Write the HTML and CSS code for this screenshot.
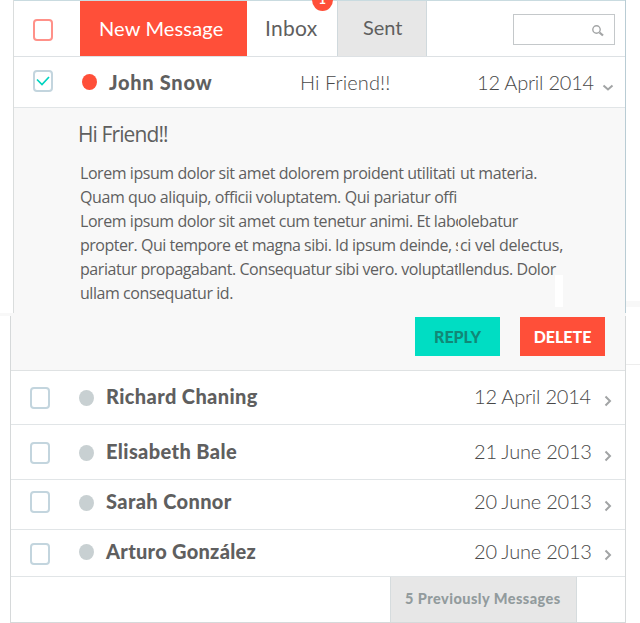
FILE: index.html
```html
<!DOCTYPE html>
<html lang="en">
<head>
<meta charset="utf-8">
<title>Messages</title>
<link rel="stylesheet" href="styles.css">
</head>
<body>
<main>
<section class="upper">
  <header class="toolbar">
    <span class="check check-red"></span>
    <a class="tab tab-new">New Message</a>
    <a class="tab tab-inbox">Inbox<span class="badge">1</span></a>
    <a class="tab tab-sent">Sent</a>
    <div class="search"><svg width="14" height="14" viewBox="0 0 14 14"><circle cx="5.5" cy="5.5" r="3.7"/><path class="handle" d="M8.5 8.5L12 11.5"/></svg></div>
  </header>
  <div class="row row-open">
    <span class="check"><svg width="16" height="16" viewBox="0 0 16 16"><path d="M2 7.5L7 12.5L14 5"/></svg></span>
    <span class="dot dot-red"></span>
    <b class="name">John Snow</b>
    <span class="subject">Hi Friend!!</span>
    <span class="date">12 April 2014</span>
    <svg class="chev" width="12" height="8" viewBox="0 0 12 8"><path d="M1.5 1.5L6 5.5L10.5 1.5"/></svg>
  </div>
  <article class="message">
    <h2>Hi Friend!!</h2>
    <div class="line"><span class="a">Lorem ipsum dolor sit amet dolorem proident utilitati</span><span class="b r1">ut materia.</span></div>
    <div class="line"><span class="a l2">Quam quo aliquip, officii voluptatem. Qui pariatur offi</span></div>
    <div class="line"><span class="a">Lorem ipsum dolor sit amet cum tenetur animi. Et labo</span><span class="b">olebatur</span></div>
    <div class="line"><span class="a l4">propter. Qui tempore et magna sibi. Id ipsum deinde, s</span><span class="b r4">ci vel delectus,</span></div>
    <div class="line"><span class="a">pariatur propagabant. Consequatur sibi vero. voluptat</span><span class="b">llendus. Dolor</span></div>
    <div class="line"><span class="a">ullam consequatur id.</span></div>
    <i class="gap-mark"></i>
  </article>
</section>
<div class="seam"></div>
<section class="lower">
  <div class="actions"><button class="reply">REPLY</button><button class="delete">DELETE</button></div>
  <div class="row r-a"><span class="check"></span><span class="dot"></span><b class="name">Richard Chaning</b><span class="date">12 April 2014</span><svg class="chev" width="8" height="12" viewBox="0 0 8 12"><path d="M1.5 1.5L6 6L1.5 10.5"/></svg></div>
  <div class="row r-b"><span class="check"></span><span class="dot"></span><b class="name">Elisabeth Bale</b><span class="date">21 June 2013</span><svg class="chev" width="8" height="12" viewBox="0 0 8 12"><path d="M1.5 1.5L6 6L1.5 10.5"/></svg></div>
  <div class="row r-c"><span class="check"></span><span class="dot"></span><b class="name">Sarah Connor</b><span class="date">20 June 2013</span><svg class="chev" width="8" height="12" viewBox="0 0 8 12"><path d="M1.5 1.5L6 6L1.5 10.5"/></svg></div>
  <div class="row r-d"><span class="check"></span><span class="dot"></span><b class="name">Arturo González</b><span class="date">20 June 2013</span><svg class="chev" width="8" height="12" viewBox="0 0 8 12"><path d="M1.5 1.5L6 6L1.5 10.5"/></svg></div>
  <footer><a class="more">5 Previously Messages</a></footer>
</section>
<i class="edge-band"></i>
<i class="edge-line"></i>
</main>
</body>
</html>
```

FILE: styles.css
```css
* { box-sizing: border-box; }
body { margin: 0; background: #fff; font-family: Lato, "Liberation Sans", sans-serif; color: #5f5f5f; }
main { position: relative; width: 640px; height: 623px; overflow: hidden; }
.upper { width: 613px; height: 313px; margin-left: 13px; border-left: 1px solid #dadddd; border-right: 1px solid #b9ccd4; overflow: hidden; }
.toolbar { display: flex; height: 57px; border-top: 1px solid #c9dbe0; border-bottom: 1px solid #dde1e4; }
.check { flex: none; display: block; width: 20px; height: 22px; border: 2px solid #c3d5de; border-radius: 4px; background: #fff; }
.check svg { display: block; }
.check path { fill: none; stroke: #00d4c0; stroke-width: 1.7; }
.check-red { margin: 18px 27px 0 19px; border-color: #ff9189; }
.tab { display: block; height: 55px; font-size: 20px; line-height: 54px; white-space: nowrap; }
.tab-new { width: 167px; padding-left: 19px; background: #ff4f39; color: #fff; letter-spacing: .15px; }
.tab-inbox { position: relative; width: 90px; padding-left: 18px; font-size: 21px; line-height: 53px; letter-spacing: .3px; }
.tab-sent { width: 90px; padding-left: 25px; background: #e7e7e7; border: solid #d0d9dd; border-width: 0 1px; line-height: 53px; }
.badge { position: absolute; left: 65px; top: -12px; width: 21px; height: 22px; border-radius: 50%; background: #ff4f39; color: #fff; font: 700 13px/20px Lato, sans-serif; text-align: center; }
.search { width: 102px; height: 31px; margin: 13px 0 0 86px; padding: 9px 0 0 77px; border: 1px solid #c4c8ca; }
.search svg { display: block; }
.search svg * { fill: none; stroke: #a3a5a6; stroke-width: 1.4; }
.search .handle { stroke-width: 2.3; }
.row { display: flex; border-bottom: 1px solid #e1e5e7; white-space: nowrap; }
.row-open { height: 51px; }
.row-open .check { margin: 13px 29px 0 19px; }
.dot { flex: none; width: 15px; height: 16px; border-radius: 50%; background: #c8d0d2; }
.dot-red { background: #ff4f39; margin-top: 17px; }
.name { font-size: 20px; font-weight: 900; line-height: 51px; letter-spacing: .38px; }
.row-open .name { width: 191px; margin-left: 12px; letter-spacing: .7px; }
.subject { width: 177px; font-size: 20px; line-height: 51px; font-weight: 300; letter-spacing: .1px; color: #484848; }
.date { width: 118px; font-size: 20px; font-weight: 300; line-height: 51px; letter-spacing: -.22px; color: #484848; }
.chev { flex: none; fill: none; stroke: #a2a4a5; stroke-width: 2; }
.row-open .chev { margin: 27px 0 0 7px; }
.message { position: relative; height: 210px; background: #f8f8f8; overflow: hidden; font-family: "Open Sans", "Noto Sans", sans-serif; font-stretch: 88%; }
.message h2 { margin: 13px 0 13px 64px; font-size: 21px; font-weight: 400; line-height: 27px; letter-spacing: -.9px; }
.line { display: flex; height: 24px; margin-left: 66px; font-size: 16px; line-height: 24px; letter-spacing: -.44px; white-space: pre; }
.a { flex: none; width: 378px; overflow: hidden; }
.l2 { letter-spacing: -.41px; }
.l4 { letter-spacing: -.48px; }
.r1 { padding-left: 2px; }
.r4 { padding-left: 2px; letter-spacing: -.3px; }
.gap-mark { position: absolute; left: 541px; top: 167px; width: 8px; height: 32px; background: #fff; }
.seam { width: 626px; height: 3px; background: #f8f8f8; }
.lower { width: 616px; height: 307px; margin-left: 10px; border: solid #d6d9da; border-width: 0 1px 1px; }
.actions { display: flex; gap: 20px; height: 55px; padding: 1px 0 0 404px; background: #f8f8f8; border-bottom: 1px solid #dfe2e3; }
button { width: 85px; height: 39px; border: 0; padding: 0; font: 900 16px/39px Lato, sans-serif; }
.reply { background: #00ddc3; color: #108977; }
.delete { background: #ff4f39; color: #fff; }
.lower .check { margin-left: 19px; }
.lower .dot { margin-left: 29px; }
.lower .name { width: 368px; margin-left: 12px; }
.lower .chev { margin-left: 12px; }
.r-a { height: 54px; }
.r-a .check { margin-top: 16px; }
.r-a .dot { margin-top: 19px; }
.r-a .chev { margin-top: 24px; }
.r-b { height: 55px; }
.r-b .check { margin-top: 17px; }
.r-b .dot { margin-top: 20px; }
.r-b .name, .r-b .date { line-height: 53px; }
.r-b .chev { margin-top: 25px; }
.r-c { height: 50px; }
.r-c .check { margin-top: 11px; }
.r-c .dot { margin-top: 15px; }
.r-c .name, .r-c .date { line-height: 43px; }
.r-c .chev { margin-top: 20px; }
.r-d { height: 47px; }
.r-d .check { margin-top: 13px; }
.r-d .dot { margin-top: 14px; }
.r-d .name { letter-spacing: .28px; }
.r-d .name, .r-d .date { line-height: 42px; }
.r-d .chev { margin-top: 19px; }
footer { height: 45px; padding-left: 379px; }
.more { display: block; width: 187px; height: 45px; padding-left: 14px; border: solid #d6dcde; border-width: 0 1px; background: #e7e7e7; color: #929b9d; font-size: 14.5px; font-weight: 900; line-height: 44px; letter-spacing: .46px; white-space: nowrap; }
.edge-band { position: absolute; left: 626px; top: 301px; width: 14px; height: 6px; background: #f8f8f8; }
.edge-line { position: absolute; left: 626px; top: 364px; width: 14px; height: 1px; background: #ededed; }
```
